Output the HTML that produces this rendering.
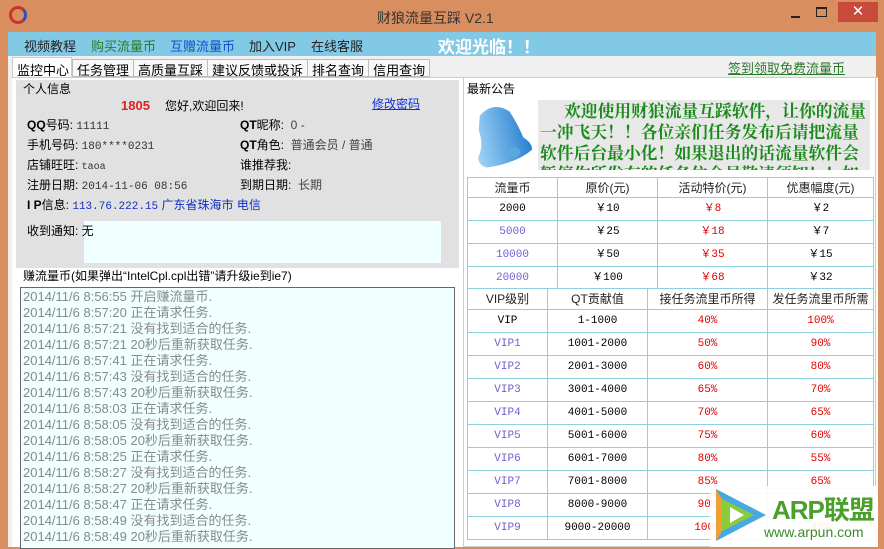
<!DOCTYPE html>
<html><head><meta charset="utf-8"><style>
*{margin:0;padding:0;box-sizing:border-box}
body{width:884px;height:547px;overflow:hidden;background:#d98e5f;font-family:"Liberation Sans","Noto Sans CJK SC",sans-serif;font-size:12px;position:relative;color:#000}
.a{position:absolute;white-space:nowrap}
table{border-collapse:collapse;position:absolute;background:#fff;table-layout:fixed}
td{border:1px solid #8fd0e0;text-align:center;font-size:11px;font-family:"Liberation Mono","Noto Sans CJK SC",monospace;padding:0;line-height:14px}
.h td{font-family:"Liberation Sans","Noto Sans CJK SC",sans-serif;font-size:12px;color:#222}
.r{color:#e00000}.p{color:#7060d0}
.ln{height:20px;line-height:20px}
</style></head><body>
<div class="a" style="left:9px;top:6px;width:18px;height:18px;border-radius:50%;border:3px solid #d03030;border-right-color:#3050c0"></div>
<div class="a" style="left:377px;top:8px;font-size:14px;color:#333">财狼流量互踩  V2.1</div>
<div class="a" style="left:791px;top:16px;width:9px;height:2px;background:#222"></div>
<div class="a" style="left:816px;top:7px;width:11px;height:10px;border:1px solid #222;border-top-width:2px"></div>
<div class="a" style="left:838px;top:2px;width:40px;height:20px;background:#c74a3a;color:#fff;text-align:center;font-size:15px;line-height:20px">✕</div>
<div class="a" style="left:8px;top:32px;width:868px;height:24px;background:#82c9e6"></div>
<div class="a" style="left:24px;top:36px;font-size:13px;color:#222">视频教程</div>
<div class="a" style="left:91px;top:36px;font-size:13px;color:#2a7a2a">购买流量币</div>
<div class="a" style="left:170px;top:36px;font-size:13px;color:#1050d0">互赠流量币</div>
<div class="a" style="left:249px;top:36px;font-size:13px;color:#222">加入VIP</div>
<div class="a" style="left:311px;top:36px;font-size:13px;color:#222">在线客服</div>
<div class="a" style="left:438px;top:33px;font-size:17px;font-weight:bold;color:#fff">欢迎光临！！</div>
<div class="a" style="left:8px;top:56px;width:868px;height:491px;background:#f0f0f0"></div>
<div class="a" style="left:12px;top:57px;width:60px;height:22px;background:#fff;border:1px solid #ccc;border-bottom:none;font-size:13px;padding:2px 4px">监控中心</div>
<div class="a" style="left:72px;top:59px;font-size:13px;border:1px solid #bbb;height:18px;display:flex;background:#f8f8f8">
<span style="padding:0 4px;border-right:1px solid #bbb">任务管理</span><span style="padding:0 4px;border-right:1px solid #bbb">高质量互踩</span><span style="padding:0 4px;border-right:1px solid #bbb">建议反馈或投诉</span><span style="padding:0 4px;border-right:1px solid #bbb">排名查询</span><span style="padding:0 4px">信用查询</span></div>
<div class="a" style="left:728px;top:58px;font-size:13px;color:#2a7a2a;text-decoration:underline">签到领取免费流量币</div>
<div class="a" style="left:12px;top:77px;width:866px;height:470px;background:#fff;border-top:1px solid #ccc"></div>
<div class="a" style="left:16px;top:80px;width:443px;height:188px;background:#e1e1e1"></div>
<div class="a" style="left:23px;top:80px;font-size:12px">个人信息</div>
<div class="a" style="left:121px;top:98px;font-size:13px;font-weight:bold;color:#e02020">1805</div>
<div class="a" style="left:165px;top:97px;font-size:12px">您好,欢迎回来!</div>
<div class="a" style="left:372px;top:95px;font-size:12px;color:#1030d0;text-decoration:underline">修改密码</div>
<div class="a" style="left:27px;top:115px;font-size:12px">
<div class="ln"><b>QQ</b>号码: <span style="font-family:'Liberation Mono';font-size:11px;color:#333">11111</span></div>
<div class="ln">手机号码: <span style="font-family:'Liberation Mono';font-size:11px;color:#333">180****0231</span></div>
<div class="ln">店铺旺旺: <span style="font-family:'Liberation Mono';font-size:10px;color:#333">taoa</span></div>
<div class="ln">注册日期: <span style="font-family:'Liberation Mono';font-size:11px;color:#333">2014-11-06 08:56</span></div>
<div class="ln"><b>I P</b>信息: <span style="color:#1030c0"><span style="font-family:'Liberation Mono';font-size:11px">113.76.222.15</span> 广东省珠海市 电信</span></div></div>
<div class="a" style="left:240px;top:115px;font-size:12px;color:#444">
<div class="ln"><b style="color:#000">QT</b><span style="color:#000">昵称:</span> &nbsp;0 -</div>
<div class="ln"><b style="color:#000">QT</b><span style="color:#000">角色:</span> &nbsp;普通会员 / 普通</div>
<div class="ln" style="color:#000">谁推荐我:</div>
<div class="ln"><span style="color:#000">到期日期:</span> &nbsp;长期</div></div>
<div class="a" style="left:84px;top:221px;width:357px;height:42px;background:#f0ffff"></div>
<div class="a" style="left:27px;top:222px;font-size:12px">收到通知: 无</div>
<div class="a" style="left:23px;top:267px;font-size:12px">赚流量币(如果弹出“IntelCpl.cpl出错”请升级ie到ie7)</div>
<div class="a" style="left:20px;top:287px;width:435px;height:262px;background:#f0ffff;border:1px solid #666;padding:1px 2px;font-size:13px;line-height:16px;color:#8a8a8a">
2014/11/6 8:56:55 开启赚流量币.<br>2014/11/6 8:57:20 正在请求任务.<br>2014/11/6 8:57:21 没有找到适合的任务.<br>2014/11/6 8:57:21 20秒后重新获取任务.<br>2014/11/6 8:57:41 正在请求任务.<br>2014/11/6 8:57:43 没有找到适合的任务.<br>2014/11/6 8:57:43 20秒后重新获取任务.<br>2014/11/6 8:58:03 正在请求任务.<br>2014/11/6 8:58:05 没有找到适合的任务.<br>2014/11/6 8:58:05 20秒后重新获取任务.<br>2014/11/6 8:58:25 正在请求任务.<br>2014/11/6 8:58:27 没有找到适合的任务.<br>2014/11/6 8:58:27 20秒后重新获取任务.<br>2014/11/6 8:58:47 正在请求任务.<br>2014/11/6 8:58:49 没有找到适合的任务.<br>2014/11/6 8:58:49 20秒后重新获取任务.</div>
<div class="a" style="left:463px;top:77px;width:413px;height:470px;border:1px solid #ccc;background:#fff"></div>
<div class="a" style="left:467px;top:80px;font-size:12px">最新公告</div>
<svg class="a" style="left:470px;top:100px" width="62" height="68" viewBox="0 0 62 68"><defs><linearGradient id="g" x1="0" x2="1"><stop offset="0" stop-color="#9fd4f5"/><stop offset="1" stop-color="#2a80d0"/></linearGradient></defs><path d="M14 12 Q30 0 44 14 Q50 30 52 42 Q60 50 58 56 Q40 66 10 64 Q2 60 4 52 Q12 42 10 26 Z" fill="url(#g)" transform="rotate(-12 30 34)"/><ellipse cx="44" cy="52" rx="6" ry="5" fill="#5aa8e0"/></svg>
<div class="a" style="left:538px;top:100px;width:332px;height:70px;background:#e8e8e8;overflow:hidden;white-space:normal;color:#1a8a1a;font-weight:bold;font-size:16.8px;line-height:21px;padding:0 2px;text-indent:24px;font-family:'Noto Serif CJK SC',serif">欢迎使用财狼流量互踩软件，让你的流量一冲飞天！！各位亲们任务发布后请把流量软件后台最小化！如果退出的话流量软件会暂停你所发布的任务位会员敬请须知！！如</div>
<table style="left:467px;top:177px;width:407px">
<tr class="h" style="height:20px"><td style="width:90px">流量币</td><td style="width:100px">原价(元)</td><td style="width:110px">活动特价(元)</td><td>优惠幅度(元)</td></tr>
<tr style="height:23px"><td>2000</td><td>￥10</td><td class="r">￥8</td><td>￥2</td></tr>
<tr style="height:23px"><td class="p">5000</td><td>￥25</td><td class="r">￥18</td><td>￥7</td></tr>
<tr style="height:23px"><td class="p">10000</td><td>￥50</td><td class="r">￥35</td><td>￥15</td></tr>
<tr style="height:23px"><td class="p">20000</td><td>￥100</td><td class="r">￥68</td><td>￥32</td></tr>
</table>
<table style="left:467px;top:288px;width:407px">
<tr class="h" style="height:21px"><td style="width:80px">VIP级别</td><td style="width:100px">QT贡献值</td><td style="width:120px">接任务流里币所得</td><td>发任务流里币所需</td></tr>
<tr style="height:23px"><td>VIP</td><td>1-1000</td><td class="r">40%</td><td class="r">100%</td></tr>
<tr style="height:23px"><td class="p">VIP1</td><td>1001-2000</td><td class="r">50%</td><td class="r">90%</td></tr>
<tr style="height:23px"><td class="p">VIP2</td><td>2001-3000</td><td class="r">60%</td><td class="r">80%</td></tr>
<tr style="height:23px"><td class="p">VIP3</td><td>3001-4000</td><td class="r">65%</td><td class="r">70%</td></tr>
<tr style="height:23px"><td class="p">VIP4</td><td>4001-5000</td><td class="r">70%</td><td class="r">65%</td></tr>
<tr style="height:23px"><td class="p">VIP5</td><td>5001-6000</td><td class="r">75%</td><td class="r">60%</td></tr>
<tr style="height:23px"><td class="p">VIP6</td><td>6001-7000</td><td class="r">80%</td><td class="r">55%</td></tr>
<tr style="height:23px"><td class="p">VIP7</td><td>7001-8000</td><td class="r">85%</td><td class="r">65%</td></tr>
<tr style="height:23px"><td class="p">VIP8</td><td>8000-9000</td><td class="r">90%</td><td class="r">50%</td></tr>
<tr style="height:23px"><td class="p">VIP9</td><td>9000-20000</td><td class="r">100%</td><td class="r">40%</td></tr>
</table>
<div class="a" style="left:710px;top:486px;width:166px;height:61px;background:rgba(255,255,255,0.92)"></div>
<svg class="a" style="left:708px;top:483px" width="64" height="64" viewBox="0 0 64 64"><path d="M8 6 L58 32 L8 58 Z" fill="#49a8e0"/><path d="M14 16 L46 32 L14 48 Z" fill="#8ccc3a"/><path d="M8 6 L14 16 L14 48 L8 58 Z" fill="#f0a030"/><path d="M22 24 L36 32 L22 40 Z" fill="#fff"/></svg>
<div class="a" style="left:772px;top:490px;font-size:26px;font-weight:bold;color:#4aa02a;letter-spacing:-1px">ARP联盟</div>
<div class="a" style="left:764px;top:524px;font-size:14px;color:#3a8a2a">www.arpun.com</div>
</body></html>
